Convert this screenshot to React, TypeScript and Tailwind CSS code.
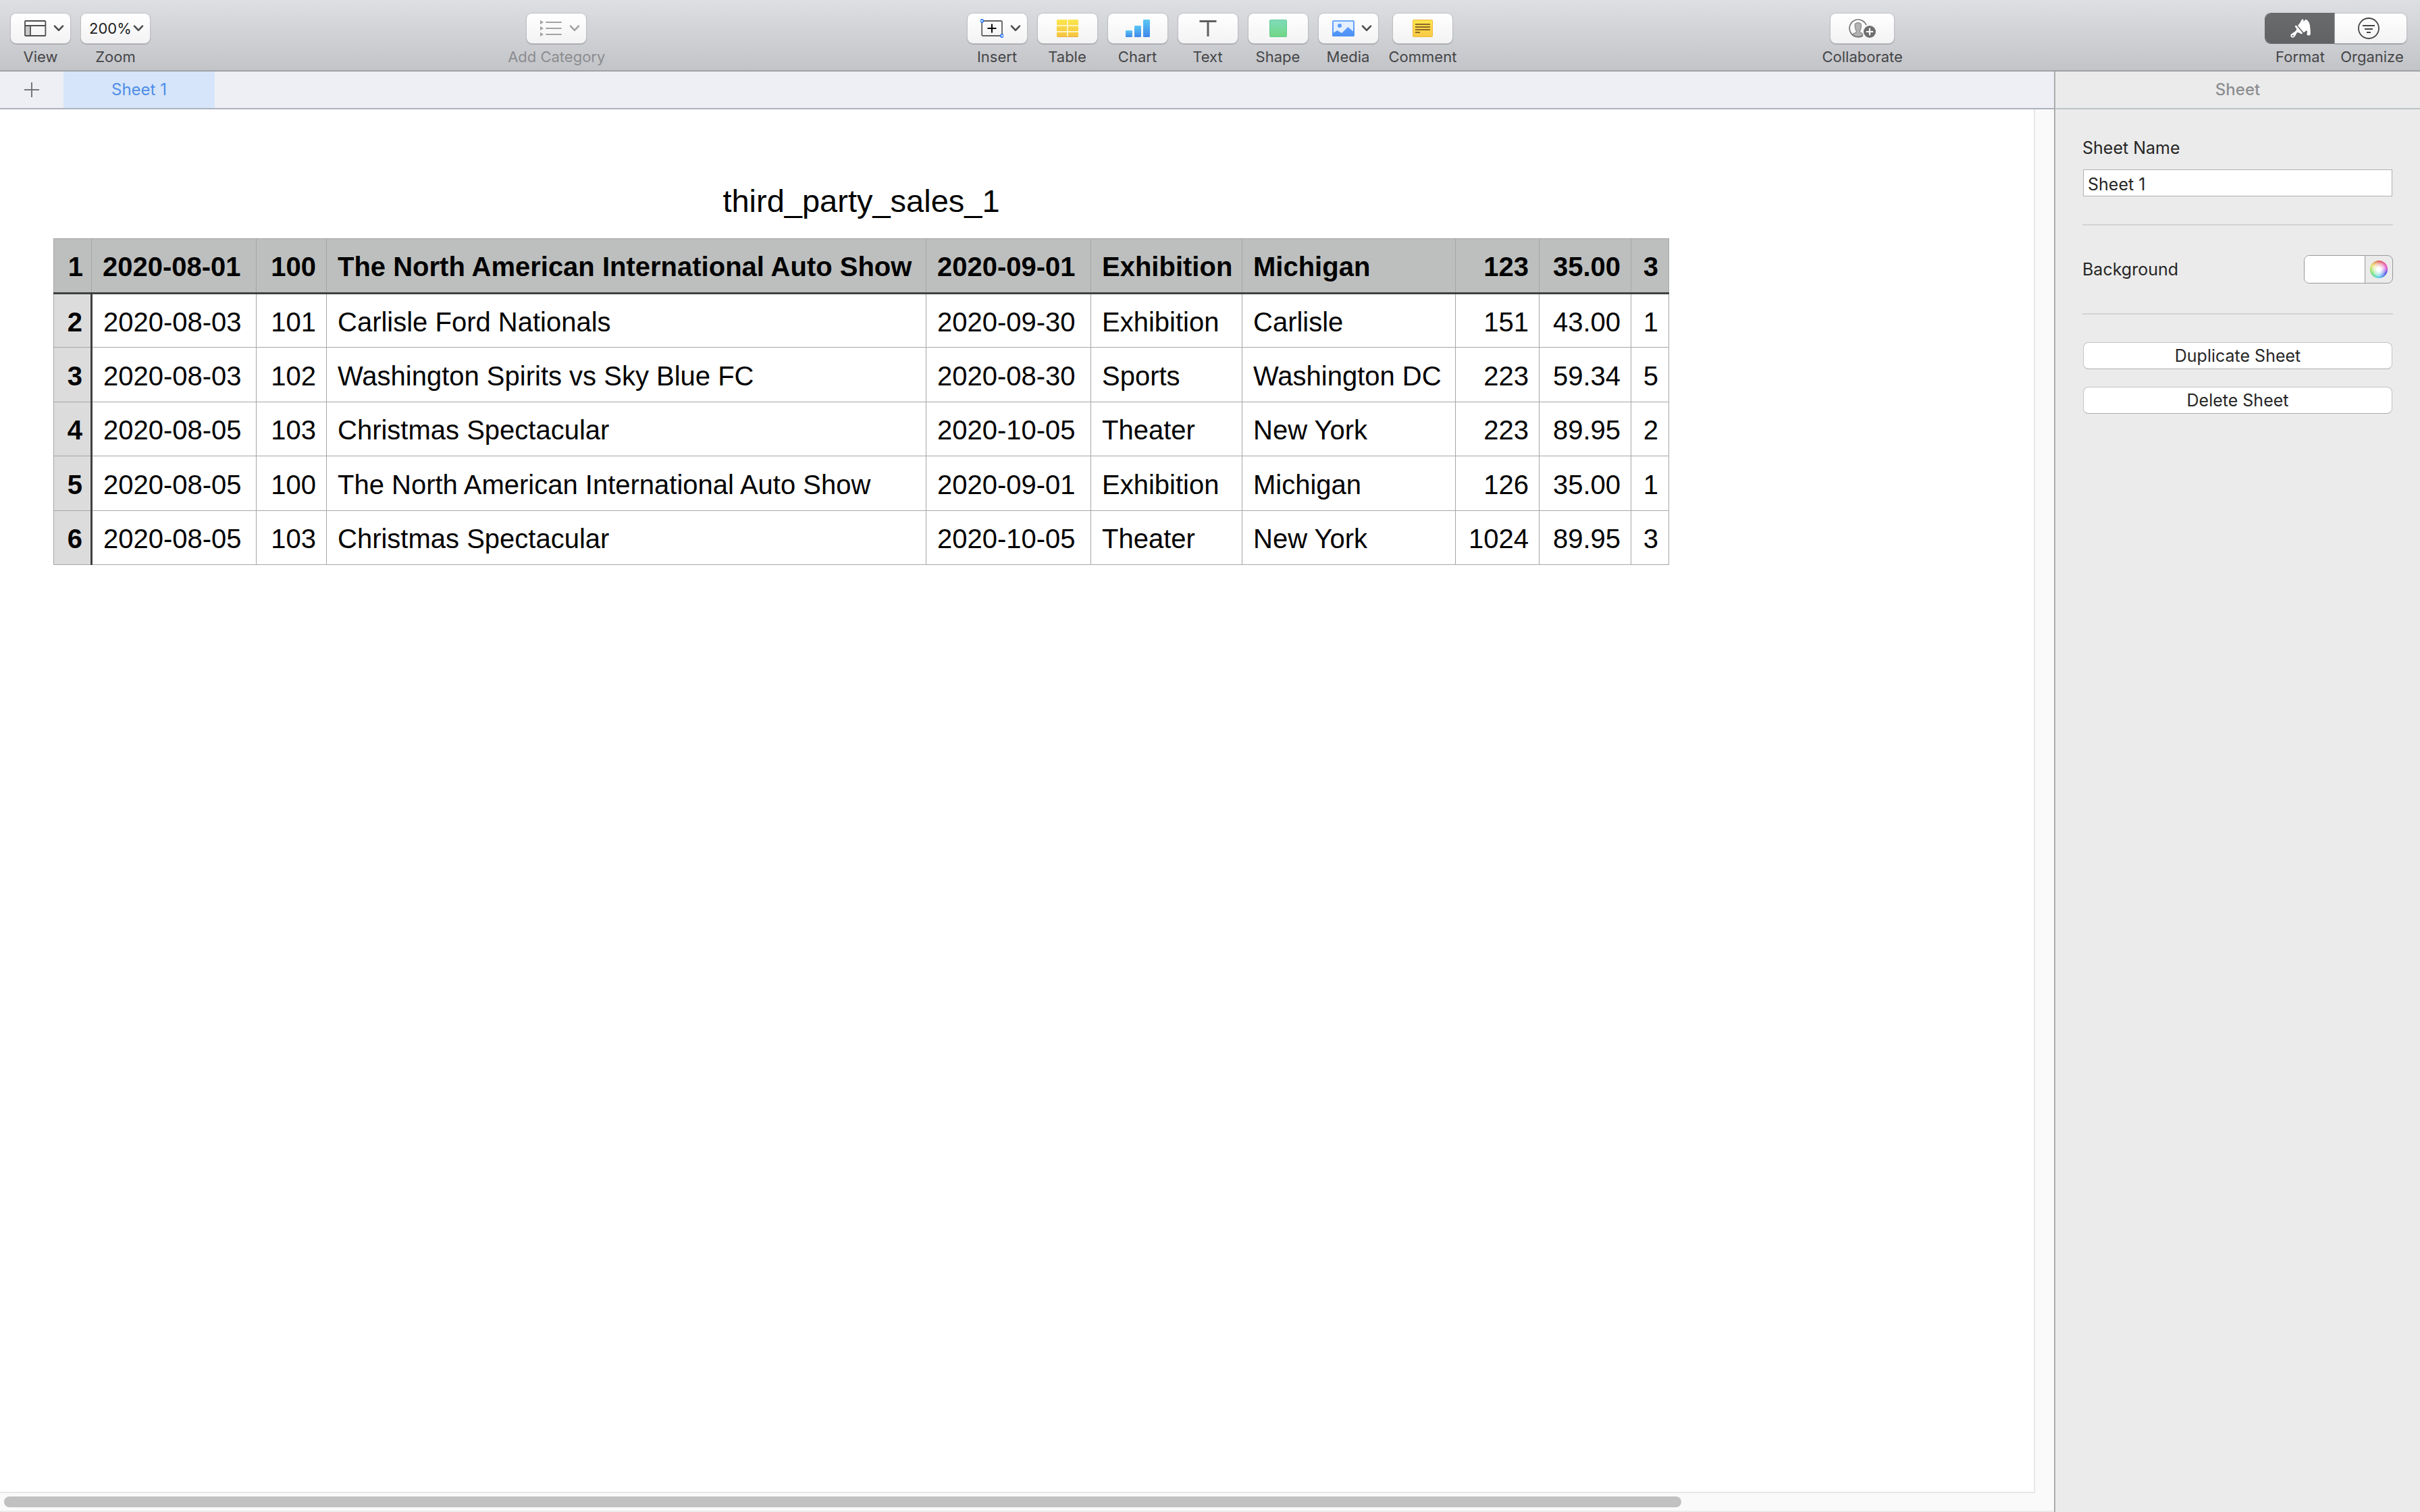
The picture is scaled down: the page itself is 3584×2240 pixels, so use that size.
import { useId, useState } from "react";
import type { ReactNode } from "react";

const HEADER = ["1", "2020-08-01", "100", "The North American International Auto Show", "2020-09-01", "Exhibition", "Michigan", "123", "35.00", "3"];

const ROWS = [
  ["2", "2020-08-03", "101", "Carlisle Ford Nationals", "2020-09-30", "Exhibition", "Carlisle", "151", "43.00", "1"],
  ["3", "2020-08-03", "102", "Washington Spirits vs Sky Blue FC", "2020-08-30", "Sports", "Washington DC", "223", "59.34", "5"],
  ["4", "2020-08-05", "103", "Christmas Spectacular", "2020-10-05", "Theater", "New York", "223", "89.95", "2"],
  ["5", "2020-08-05", "100", "The North American International Auto Show", "2020-09-01", "Exhibition", "Michigan", "126", "35.00", "1"],
  ["6", "2020-08-05", "103", "Christmas Spectacular", "2020-10-05", "Theater", "New York", "1024", "89.95", "3"],
];

const isNumeric = (column: number) => column === 2 || column >= 7;

function Chevron() {
  return (
    <svg className="h-[10px] w-4" viewBox="0 0 16 10" fill="none" stroke="currentColor" strokeWidth="2.6" strokeLinecap="round" strokeLinejoin="round" aria-hidden="true">
      <path d="M2 1.6 8 7.8 14 1.6" />
    </svg>
  );
}

function ViewIcon() {
  return (
    <svg className="h-7 w-[34px]" viewBox="0 0 34 28" fill="none" stroke="#4d4d4d" strokeWidth="1.8" aria-hidden="true">
      <rect x="3" y="10" width="6" height="15" fill="#c9c9c9" stroke="none" />
      <rect x="2" y="3" width="30.4" height="22" rx="1" />
      <path d="M2 10h30.4M10 10v15" />
    </svg>
  );
}

function CategoryIcon() {
  return (
    <svg className="h-7 w-[34px]" viewBox="0 0 34 28" aria-hidden="true">
      <path d="M10 5h22M10 14h22M10 23h22" stroke="#a3a3a3" strokeWidth="2" strokeLinecap="round" />
      <path d="M1 1.8 6 5 1 8.2zM1 10.8 6 14 1 17.2zM1 19.8 6 23 1 26.2z" fill="#a3a3a3" />
    </svg>
  );
}

function InsertIcon() {
  return (
    <svg className="h-7 w-[34px]" viewBox="0 0 34 28" fill="none" aria-hidden="true">
      <rect x="2.2" y="3" width="29.8" height="22" rx="1.5" stroke="#606060" strokeWidth="1.8" />
      <path d="M17 7.5v13M10.5 14h13" stroke="#000" strokeWidth="2" />
      <circle cx="2.2" cy="3" r="2.1" fill="#fff" stroke="#2f7cf6" strokeWidth="1.8" />
      <circle cx="32" cy="25" r="2.1" fill="#fff" stroke="#2f7cf6" strokeWidth="1.8" />
    </svg>
  );
}

function TableIcon() {
  return (
    <svg className="h-[26px] w-8" viewBox="0 0 32 26" aria-hidden="true">
      <defs>
        <linearGradient id="tableFill" x1="0" y1="0" x2="0" y2="1">
          <stop offset="0" stopColor="#fbe64d" />
          <stop offset="1" stopColor="#f6c23f" />
        </linearGradient>
      </defs>
      <rect width="32" height="26" rx="1.5" fill="url(#tableFill)" />
      <path d="M0 9h32M0 18h32M16 0v26" stroke="#fdf3bd" strokeWidth="2" />
      <path d="M1 25.5h30" stroke="#eaa93c" strokeWidth="1" />
    </svg>
  );
}

function ChartIcon() {
  return (
    <svg className="h-[26px] w-9" viewBox="0 0 36 26" aria-hidden="true">
      <defs>
        <linearGradient id="barFill" x1="0" y1="0" x2="0" y2="1">
          <stop offset="0" stopColor="#5ac8f5" />
          <stop offset="1" stopColor="#3f87ea" />
        </linearGradient>
      </defs>
      <rect x="0" y="16" width="10" height="10" rx="1" fill="url(#barFill)" />
      <rect x="13" y="9" width="10" height="17" rx="1" fill="url(#barFill)" />
      <rect x="26" y="0" width="10" height="26" rx="1" fill="url(#barFill)" />
    </svg>
  );
}

function TextIcon() {
  return (
    <svg className="h-6 w-[26px]" viewBox="0 0 26 24" stroke="#5f5f5f" strokeWidth="3" aria-hidden="true">
      <path d="M.5 1.5h25M13 1.5V24" />
    </svg>
  );
}

function ShapeIcon() {
  return (
    <svg className="size-[26px]" viewBox="0 0 26 26" aria-hidden="true">
      <defs>
        <linearGradient id="shapeFill" x1="0" y1="0" x2="0" y2="1">
          <stop offset="0" stopColor="#7fdcbb" />
          <stop offset="1" stopColor="#72d684" />
        </linearGradient>
      </defs>
      <rect x=".5" y=".5" width="25" height="25" rx="1" fill="url(#shapeFill)" stroke="#62cc92" />
    </svg>
  );
}

function MediaIcon() {
  return (
    <svg className="h-7 w-[34px]" viewBox="0 0 34 28" aria-hidden="true">
      <defs>
        <linearGradient id="mediaFill" x1="0" y1="0" x2="0" y2="1">
          <stop offset="0" stopColor="#6ea8f8" />
          <stop offset="1" stopColor="#4a90f7" />
        </linearGradient>
      </defs>
      <rect x="1" y="2" width="33" height="24" rx="1.5" fill="url(#mediaFill)" />
      <path d="M3 4h29v14.5L24.3 12 15 21 8.500 17 3 20.500z" fill="#e3effe" />
      <circle cx="12" cy="10" r="3" fill="#5b9bf8" />
    </svg>
  );
}

function CommentIcon() {
  return (
    <svg className="h-[26px] w-[30px]" viewBox="0 0 30 26" aria-hidden="true">
      <defs>
        <linearGradient id="noteFill" x1="0" y1="0" x2="0" y2="1">
          <stop offset="0" stopColor="#fbe64d" />
          <stop offset="1" stopColor="#f8c845" />
        </linearGradient>
      </defs>
      <rect x=".5" y=".5" width="29" height="25" rx="1" fill="url(#noteFill)" stroke="#efb93e" />
      <path d="M4 7h22M4 11h22M4 15h22M4 19h7" stroke="#8d6a26" strokeWidth="2" />
    </svg>
  );
}

function CollaborateIcon() {
  return (
    <svg className="h-7 w-10" viewBox="0 0 40 28" fill="none" aria-hidden="true">
      <path d="M5.400 22.800C7 20.800 10.800 21 11.300 19.300 11.700 17.600 9.400 15.500 9.200 11.500 8.500 7.500 9.600 5.700 13.700 5.700S19 7.500 18.300 11.500C18.100 15.500 16 17.600 16.400 19.300 16.800 20.700 20 20.700 21.500 22.500 17.500 27.500 10 27.500 5.400 22.800z" fill="#b3b3b3" stroke="#868686" strokeWidth="1.200" />
      <path d="M26 9.200A12.900 12.900 0 1 0 21 24.800" stroke="#757575" strokeWidth="1.700" />
      <circle cx="31" cy="19" r="10.500" fill="#f7f7f7" />
      <circle cx="31" cy="19" r="9" fill="#6e6e6e" />
      <path d="M31 13.800v10.400M25.800 19h10.400" stroke="#fff" strokeWidth="2.200" />
    </svg>
  );
}

function FormatIcon() {
  return (
    <svg className="h-7 w-[30px]" viewBox="0 0 90 84" aria-hidden="true">
      <path
        d="M33 30 44 16 50 4C52 0 59 1 59 6L57 13 65 5C68 2 73 3 76 7 83 14 86 22 87 31 88 44 91 60 89 69 86 75 76 75 74 70 72 64 77 57 74 52 69 51 65 60 59 60z"
        fill="#fff"
      />
      <path d="M23 29C18 33 23 39 27 43 29 50 23 54 18 58 11 64 2 66 1 74 1 82 11 86 17 81 24 75 25 67 30 61 35 58 42 66 49 67 54 67 55 64 53 61L28 31C26 29 25 28 23 29z" fill="#fff" />
      <circle cx="11" cy="75" r="3.500" fill="#666768" />
    </svg>
  );
}

function OrganizeIcon() {
  return (
    <svg className="size-8" viewBox="0 0 32 32" fill="none" stroke="#454545" aria-hidden="true">
      <circle cx="16" cy="16" r="15" strokeWidth="1.800" />
      <path d="M7 12h18M10 17h12M13 22h6" strokeWidth="2" />
    </svg>
  );
}

type ToolProps = { label: string; menu?: boolean; disabled?: boolean; wide?: boolean; children: ReactNode };

function Tool({ label, menu, disabled, wide, children }: ToolProps) {
  const id = useId();
  return (
    <div className="flex flex-col items-center gap-[7px]">
      <button
        type="button"
        disabled={disabled}
        aria-labelledby={id}
        className={`flex h-11 items-center rounded-lg bg-linear-to-b from-white to-[#f3f3f3] shadow-[0_0_0_1px_#bfc0c4,0_1px_1px_1px_#a4a5a9] ${wide ? "w-[94px]" : "w-[88px]"} ${menu ? "justify-between pr-[9px] pl-[19px]" : "justify-center"} ${disabled ? "text-[#a3a3a3]" : "text-[#4b4b4b]"}`}
      >
        {children}
        {menu && <Chevron />}
      </button>
      <span id={id} className={`text-[22px] leading-[26px] whitespace-nowrap ${disabled ? "text-[#8c8d90]" : "text-[#454648]"}`}>
        {label}
      </span>
    </div>
  );
}

function ZoomTool() {
  return (
    <div className="flex flex-col items-center gap-[7px]">
      <div className="relative flex h-11 w-[102px] items-center rounded-lg bg-linear-to-b from-white to-[#f3f3f3] text-[#4b4b4b] shadow-[0_0_0_1px_#bfc0c4,0_1px_1px_1px_#a4a5a9]">
        <select id="zoom" defaultValue="200%" className="size-full appearance-none bg-transparent pl-3 text-[22px] text-[#1e1e1e]">
          <option>100%</option>
          <option>200%</option>
        </select>
        <span className="pointer-events-none absolute right-[9px]">
          <Chevron />
        </span>
      </div>
      <label htmlFor="zoom" className="text-[22px] leading-[26px] text-[#454648]">
        Zoom
      </label>
    </div>
  );
}

function InspectorSwitch() {
  return (
    <div className="grid grid-cols-[103px_106px] gap-y-[7px]">
      <button type="button" aria-labelledby="format-label" aria-pressed="true" className="flex h-11 items-center justify-center rounded-l-lg bg-linear-to-b from-[#6a6b6c] to-[#616263] shadow-[0_0_0_1px_#66676a]">
        <FormatIcon />
      </button>
      <button type="button" aria-labelledby="organize-label" aria-pressed="false" className="flex h-11 items-center justify-center rounded-r-lg bg-linear-to-b from-white to-[#f3f3f3] pr-1.5 shadow-[1px_0_0_0_#bfc0c4,0_-1px_0_0_#bfc0c4,0_1px_1px_1px_#a4a5a9]">
        <OrganizeIcon />
      </button>
      <span id="format-label" className="text-center text-[22px] leading-[26px] text-[#454648]">
        Format
      </span>
      <span id="organize-label" className="pl-1 text-center text-[22px] leading-[26px] text-[#454648]">
        Organize
      </span>
    </div>
  );
}

function Toolbar() {
  return (
    <header className="flex h-[106px] shrink-0 items-start border-b-2 border-[#a0a1a5] bg-linear-to-b from-[#dddfe3] to-[#c3c4c8] pt-5 pr-5 pl-4">
      <div className="flex gap-4">
        <Tool label="View" menu>
          <ViewIcon />
        </Tool>
        <ZoomTool />
      </div>
      <div className="grow-[530] basis-0" />
      <Tool label="Add Category" menu disabled>
        <CategoryIcon />
      </Tool>
      <div className="grow-[536] basis-0" />
      <div className="flex gap-4">
        <Tool label="Insert" menu>
          <InsertIcon />
        </Tool>
        <Tool label="Table">
          <TableIcon />
        </Tool>
        <Tool label="Chart">
          <ChartIcon />
        </Tool>
        <Tool label="Text">
          <TextIcon />
        </Tool>
        <Tool label="Shape">
          <ShapeIcon />
        </Tool>
        <Tool label="Media" menu>
          <MediaIcon />
        </Tool>
        <Tool label="Comment">
          <CommentIcon />
        </Tool>
      </div>
      <div className="grow-[541] basis-0" />
      <Tool label="Collaborate" wide>
        <CollaborateIcon />
      </Tool>
      <div className="grow-[537] basis-0" />
      <InspectorSwitch />
    </header>
  );
}

function SheetTabs() {
  return (
    <nav className="flex h-14 shrink-0 border-b-2 border-[#acb1bd] bg-[#eeeff4]">
      <button type="button" aria-label="Add sheet" className="flex w-[94px] items-center justify-center">
        <svg className="size-[22px]" viewBox="0 0 22 22" stroke="#747577" strokeWidth="2" aria-hidden="true">
          <path d="M11 0v22M0 11h22" />
        </svg>
      </button>
      <button type="button" className="w-56 bg-[#d6e5f9] text-2xl text-[#4f8ee8]">
        Sheet 1
      </button>
    </nav>
  );
}

function SalesTable() {
  return (
    <table className="w-[2393px] table-fixed border-collapse font-['Liberation_Sans',Arial,sans-serif] text-[40px] leading-[46px] text-black">
      <caption className="pb-[27px] text-center text-[47px] leading-[56px]">third_party_sales_1</caption>
      <colgroup>
        <col className="w-[56px]" />
        <col className="w-[244px]" />
        <col className="w-[104px]" />
        <col className="w-[888px]" />
        <col className="w-[244px]" />
        <col className="w-[224px]" />
        <col className="w-[316px]" />
        <col className="w-[124px]" />
        <col className="w-[136px]" />
        <col className="w-[56px]" />
      </colgroup>
      <thead>
        <tr className="h-[81px] bg-[#bdbfbe]">
          {HEADER.map((cell, i) => (
            <th
              key={i}
              scope="col"
              className={`border border-b-3 border-[#a5a6a6] border-b-[#3f4040] pt-[3px] font-bold whitespace-nowrap ${i === 0 ? "pr-3 text-right" : isNumeric(i) ? "pr-[15px] text-right" : "pl-4 text-left"}`}
            >
              {cell}
            </th>
          ))}
        </tr>
      </thead>
      <tbody>
        {ROWS.map((row) => (
          <tr key={row[0]} className="odd:h-20 even:h-[81px]">
            <th scope="row" className="border border-r-3 border-[#a5a6a6] border-r-[#3f4040] bg-[#dcdcdc] pt-[3px] pr-3 text-right font-bold">
              {row[0]}
            </th>
            {row.slice(1).map((cell, i) => (
              <td key={i} className={`border border-[#a5a6a6] pt-[3px] whitespace-nowrap ${isNumeric(i + 1) ? "pr-[15px] text-right" : "pl-4 text-left"}`}>
                {cell}
              </td>
            ))}
          </tr>
        ))}
      </tbody>
    </table>
  );
}

function Canvas() {
  return (
    <div className="flex min-h-0 flex-1 flex-col border-b-2 border-[#ebebeb] bg-[#fafafa]">
      <div className="mr-7 flex-1 border-r-2 border-b-2 border-[#e7e7e7] bg-white pt-[108px] pl-[79px]">
        <SalesTable />
      </div>
      <div className="flex h-[26px] items-center pl-1.5">
        <div className="h-4 w-9/11 rounded-full bg-[#c1c1c1]" />
      </div>
    </div>
  );
}

function Inspector() {
  const [name, setName] = useState("Sheet 1");
  return (
    <aside className="flex w-[542px] shrink-0 flex-col border-l-2 border-[#acacac] bg-[#ebebeb] text-[25px] leading-[30px] text-[#262626]">
      <h2 className="flex h-14 items-center justify-center border-b-2 border-[#bcc2c6] text-2xl font-medium text-[#8c8f91]">Sheet</h2>
      <div className="flex flex-col px-10 pt-[42px]">
        <label htmlFor="sheet-name">Sheet Name</label>
        <input
          id="sheet-name"
          value={name}
          onChange={(e) => setName(e.target.value)}
          className="mx-px mt-[17px] h-10 border border-[#b0b0b0] bg-white px-1.5 pt-[3px]"
        />
        <hr className="mt-[41px] border-t-2 border-[#d3d3d3]" />
        <div className="mt-11 flex h-[42px] items-center justify-between">
          <span id="background-label">Background</span>
          <div role="group" aria-labelledby="background-label" className="flex h-[42px] w-[132px] overflow-hidden rounded-lg border border-[#989898]">
            <button type="button" aria-label="Background color" className="flex-1 bg-white" />
            <button type="button" aria-label="Color wheel" className="flex w-[41px] items-center justify-center border-l border-[#989898]">
              <span className="size-[26px] rounded-full bg-[radial-gradient(circle,#ffffff_15%,rgba(255,255,255,0.6)_45%,rgba(255,255,255,0)_72%),conic-gradient(#d94a3c,#e040c8_75deg,#3a3ae0_120deg,#3ccbe8_180deg,#5fdc5a_240deg,#e8dc50_300deg,#d94a3c)]" />
            </button>
          </div>
        </div>
        <hr className="mt-11 border-t-2 border-[#d3d3d3]" />
        <button type="button" className="mx-px mt-[41px] h-10 rounded-lg border border-[#c4c4c4] border-b-[#acacac] bg-white">
          Duplicate Sheet
        </button>
        <button type="button" className="mx-px mt-[26px] h-10 rounded-lg border border-[#c4c4c4] border-b-[#acacac] bg-white">
          Delete Sheet
        </button>
      </div>
    </aside>
  );
}

export default function App() {
  return (
    <div className="flex h-screen flex-col bg-white font-[Inter,Roboto,sans-serif]">
      <Toolbar />
      <div className="flex min-h-0 flex-1">
        <main className="flex min-w-0 flex-1 flex-col">
          <SheetTabs />
          <Canvas />
        </main>
        <Inspector />
      </div>
    </div>
  );
}
